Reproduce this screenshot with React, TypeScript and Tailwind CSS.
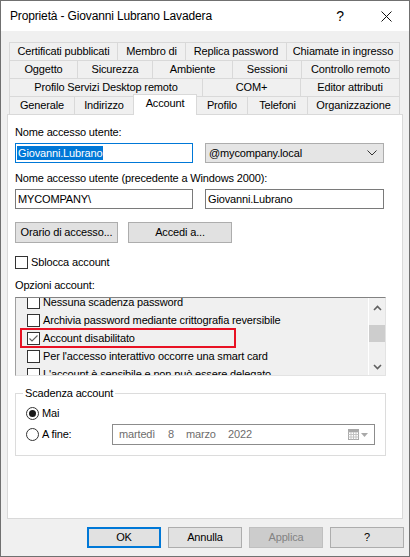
import React from 'react'

const tabRows: { label: string; w: string; last?: boolean }[][] = [
  [
    { label: 'Certificati pubblicati', w: 'w-[108px]' },
    { label: 'Membro di', w: 'w-[68px]' },
    { label: 'Replica password', w: 'w-[101px]' },
    { label: 'Chiamate in ingresso', w: 'w-[114px]', last: true },
  ],
  [
    { label: 'Oggetto', w: 'w-[68px]' },
    { label: 'Sicurezza', w: 'w-[75px]' },
    { label: 'Ambiente', w: 'w-[80px]' },
    { label: 'Sessioni', w: 'w-[69px]' },
    { label: 'Controllo remoto', w: 'w-[99px]', last: true },
  ],
  [
    { label: 'Profilo Servizi Desktop remoto', w: 'w-[193px]' },
    { label: 'COM+', w: 'w-[98px]' },
    { label: 'Editor attributi', w: 'w-[100px]', last: true },
  ],
]

const options = [
  { label: 'Nessuna scadenza password', checked: false },
  { label: 'Archivia password mediante crittografia reversibile', checked: false },
  { label: 'Account disabilitato', checked: true },
  { label: "Per l'accesso interattivo occorre una smart card", checked: false },
  { label: "L'account è sensibile e non può essere delegato", checked: false },
]

function Tab({ label, w, last }: { label: string; w: string; last?: boolean }) {
  return (
    <div
      className={`${w} h-[18px] shrink-0 border-t border-l ${last ? 'border-r' : ''} border-[#d9d9d9] bg-[#f0f0f0] flex items-center justify-center whitespace-nowrap`}
    >
      {label}
    </div>
  )
}

function Checkbox({ checked }: { checked?: boolean }) {
  return (
    <div className="w-[13px] h-[13px] shrink-0 border border-[#333333] bg-white flex items-center justify-center">
      {checked && (
        <svg width="11" height="11" viewBox="0 0 11 11">
          <polyline points="1.5,5.5 4,8 9.5,2.5" fill="none" stroke="#5f5f5f" strokeWidth="1.1" />
        </svg>
      )}
    </div>
  )
}

function Radio({ checked }: { checked?: boolean }) {
  return (
    <div className="w-[13px] h-[13px] shrink-0 rounded-full border border-[#333333] bg-white flex items-center justify-center">
      {checked && <div className="w-[7px] h-[7px] rounded-full bg-[#1a1a1a]" />}
    </div>
  )
}

function Chevron({ up }: { up?: boolean }) {
  return (
    <svg width="9" height="6" viewBox="0 0 9 6">
      <polyline
        points={up ? '1,5 4.5,1.5 8,5' : '1,1 4.5,4.5 8,1'}
        fill="none"
        stroke="#606060"
        strokeWidth="1.6"
      />
    </svg>
  )
}

function DlgButton({ children, variant }: { children: React.ReactNode; variant?: 'default' | 'disabled' }) {
  const look =
    variant === 'default'
      ? 'border-2 border-[#0078d7] bg-[#e1e1e1] text-black'
      : variant === 'disabled'
        ? 'border border-[#bfbfbf] bg-[#cccccc] text-[#838383]'
        : 'border border-[#adadad] bg-[#e1e1e1] text-black'
  return <div className={`w-[74px] h-[21px] flex items-center justify-center ${look}`}>{children}</div>
}

export default function App() {
  return (
    <div className="w-[410px] h-[557px] border border-[#707070] bg-[#f0f0f0] flex flex-col text-[11px] tracking-[-0.15px] text-black font-['Liberation_Sans',Arial,sans-serif] overflow-hidden select-none">
      {/* barra del titolo */}
      <div className="h-[30px] shrink-0 bg-white flex items-center">
        <div className="pl-[9px] text-[12px] flex-1">Proprietà - Giovanni Lubrano Lavadera</div>
        <div className="w-[46px] h-full flex items-center justify-center text-[14px]">?</div>
        <div className="w-[46px] h-full flex items-center justify-center">
          <svg width="11" height="11" viewBox="0 0 11 11">
            <path d="M0.5 0.5 L10.5 10.5 M10.5 0.5 L0.5 10.5" stroke="#111" strokeWidth="1" />
          </svg>
        </div>
      </div>

      {/* schede */}
      <div className="mt-[11px] ml-[8px] flex flex-col">
        {tabRows.map((row, i) => (
          <div key={i} className="flex h-[18px]">
            {row.map((t) => (
              <Tab key={t.label} {...t} />
            ))}
          </div>
        ))}
        <div className="flex h-[18px]">
          <Tab label="Generale" w="w-[65px]" />
          <Tab label="Indirizzo" w="w-[59px]" />
          <div className="relative z-10 w-[64px] h-[21px] -mt-[2px] shrink-0 border-t border-l border-r border-[#d9d9d9] bg-white flex justify-center">
            Account
          </div>
          <div className="w-[50px] h-[18px] shrink-0 border-t border-[#d9d9d9] bg-[#f0f0f0] flex items-center justify-center">
            Profilo
          </div>
          <Tab label="Telefoni" w="w-[60px]" />
          <Tab label="Organizzazione" w="w-[93px]" last />
        </div>
      </div>

      {/* pannello Account */}
      <div className="ml-[6px] w-[396px] h-[405px] shrink-0 border border-[#d9d9d9] bg-white pl-[7px] pt-[10px] flex flex-col">
        <div className="h-[14px] leading-[14px]">Nome accesso utente:</div>
        <div className="mt-[4px] flex gap-[12px]">
          <div className="w-[178px] h-[20px] border border-[#0078d7] flex items-center pl-[1px]">
            <span className="bg-[#0078d7] text-white leading-[14px] px-[1px]">Giovanni.Lubrano</span>
          </div>
          <div className="w-[179px] h-[20px] border border-[#adadad] bg-[#e5e5e5] flex items-center justify-between pl-[3px] pr-[6px]">
            <span>@mycompany.local</span>
            <svg width="10" height="6" viewBox="0 0 10 6">
              <polyline points="0.5,0.5 5,5 9.5,0.5" fill="none" stroke="#333" strokeWidth="1" />
            </svg>
          </div>
        </div>

        <div className="mt-[8px] h-[14px] leading-[14px]">Nome accesso utente (precedente a Windows 2000):</div>
        <div className="mt-[4px] flex gap-[12px]">
          <div className="w-[178px] h-[20px] border border-[#7a7a7a] flex items-center pl-[2px]">MYCOMPANY\</div>
          <div className="w-[179px] h-[20px] border border-[#7a7a7a] flex items-center pl-[2px]">Giovanni.Lubrano</div>
        </div>

        <div className="mt-[13px] flex gap-[10px]">
          <div className="w-[103px] h-[21px] border border-[#adadad] bg-[#e1e1e1] flex items-center justify-center">
            Orario di accesso...
          </div>
          <div className="w-[104px] h-[21px] border border-[#adadad] bg-[#e1e1e1] flex items-center justify-center">
            Accedi a...
          </div>
        </div>

        <div className="mt-[13px] h-[13px] flex items-center gap-[3px]">
          <Checkbox />
          <span>Sblocca account</span>
        </div>

        <div className="mt-[9px] h-[14px] leading-[14px]">Opzioni account:</div>

        {/* elenco opzioni */}
        <div className="relative mt-[5px] w-[371px] h-[79px] border-t border-l border-t-[#828282] border-l-[#a0a0a0] border-r border-b border-r-[#e3e3e3] border-b-[#e3e3e3] bg-[#f0f0f0] flex overflow-hidden">
          <div className="flex-1 overflow-hidden">
            <div className="-mt-[5px] flex flex-col">
              {options.map((o) => (
                <div key={o.label} className="h-[18px] flex items-center gap-[3px] pl-[11px] whitespace-nowrap">
                  <Checkbox checked={o.checked} />
                  <span>{o.label}</span>
                </div>
              ))}
            </div>
          </div>
          <div className="w-[17px] shrink-0 border-l border-white bg-[#f0f0f0] flex flex-col">
            <div className="h-[17px] flex items-center justify-center pt-[2px]">
              <Chevron up />
            </div>
            <div className="flex-1">
              <div className="mt-[10px] h-[17px] bg-[#cdcdcd]" />
            </div>
            <div className="h-[17px] flex items-center justify-center">
              <Chevron />
            </div>
          </div>
          <div className="absolute left-[4px] top-[30px] w-[216px] h-[20px] border-2 border-[#e81123]" />
        </div>

        {/* scadenza account */}
        <fieldset className="mt-[10px] w-[371px] border border-[#dcdcdc] pl-[10px] pb-[10px]">
          <legend className="ml-[-3px] px-[2px] h-[14px] leading-[14px]">Scadenza account</legend>
          <div className="mt-[7px] h-[13px] flex items-center gap-[3px]">
            <Radio checked />
            <span>Mai</span>
          </div>
          <div className="mt-[4px] h-[21px] flex items-center">
            <div className="w-[86px] flex items-center gap-[3px]">
              <Radio />
              <span>A fine:</span>
            </div>
            <div className="w-[263px] h-[21px] border border-[#8c8c8c] bg-white flex items-center pl-[6px] pr-[6px] text-[#6d6d6d]">
              <span className="w-[49px]">martedì</span>
              <span className="w-[18px]">8</span>
              <span className="w-[42px]">marzo</span>
              <span>2022</span>
              <div className="ml-auto flex items-center gap-[2px]">
                <svg width="11" height="11" viewBox="0 0 11 11">
                  <rect x="0.5" y="0.5" width="10" height="10" fill="#fff" stroke="#a9a9a9" />
                  <path d="M0.5 3 H10.5 M0.5 5.5 H10.5 M0.5 8 H10.5 M3 3 V10.5 M5.5 3 V10.5 M8 3 V10.5" stroke="#c4c4c4" />
                  <rect x="1" y="1" width="9" height="2" fill="#a9a9a9" />
                </svg>
                <svg width="7" height="4" viewBox="0 0 7 4">
                  <polygon points="0,0 7,0 3.5,4" fill="#a9a9a9" />
                </svg>
              </div>
            </div>
          </div>
        </fieldset>
      </div>

      {/* pulsanti */}
      <div className="mt-[8px] flex justify-end gap-[7px] pr-[5px]">
        <DlgButton variant="default">OK</DlgButton>
        <DlgButton>Annulla</DlgButton>
        <DlgButton variant="disabled">Applica</DlgButton>
        <DlgButton>?</DlgButton>
      </div>
    </div>
  )
}
